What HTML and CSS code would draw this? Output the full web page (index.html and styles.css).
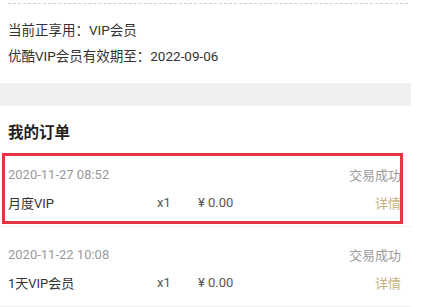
FILE: index.html
```html
<!DOCTYPE html>
<html lang="zh">
<head>
<meta charset="utf-8">
<link rel="stylesheet" href="styles.css">
</head>
<body>
<div class="page">
  <div class="top">
    <div class="dash"></div>
    <div class="infos">
      <div class="info">当前正享用：VIP会员</div>
      <div class="info">优酷VIP会员有效期至：2022-09-06</div>
    </div>
  </div>
  <div class="band"></div>
  <div class="title">我的订单</div>
  <div class="order">
    <div class="row">
      <span class="date">2020-11-27 08:52</span>
      <span class="status">交易成功</span>
    </div>
    <div class="row">
      <span class="name">月度VIP</span>
      <span class="qty">x1</span>
      <span class="price">¥ 0.00</span>
      <span class="detail">详情</span>
    </div>
    <div class="highlight"></div>
  </div>
  <div class="order">
    <div class="row">
      <span class="date">2020-11-22 10:08</span>
      <span class="status">交易成功</span>
    </div>
    <div class="row">
      <span class="name">1天VIP会员</span>
      <span class="qty">x1</span>
      <span class="price">¥ 0.00</span>
      <span class="detail">详情</span>
    </div>
  </div>
</div>
</body>
</html>
```
FILE: styles.css
```css
html, body {
  margin: 0;
  padding: 0;
  background: #ffffff;
}
body {
  font-family: Roboto, "Noto Sans CJK SC", sans-serif;
  color: #333333;
  font-size: 13px;
}
.page {
  width: 411px;
}
.top {
  height: 80px;
  padding: 0 8px;
  box-sizing: border-box;
}
.dash {
  margin: 3px -5px 0 0;
  border-top: 1px dashed #cfcfcf;
}
.infos {
  margin-top: 13px;
}
.info {
  line-height: 26px;
  font-size: 13.5px;
}
.band {
  height: 23px;
  background: #efefef;
}
.title {
  height: 41px;
  box-sizing: border-box;
  padding: 16px 8px 0;
  line-height: 22px;
  font-size: 15.5px;
  font-weight: bold;
  color: #222222;
}
.order {
  position: relative;
  height: 80px;
  box-sizing: border-box;
  padding: 13px 10px 0 8px;
  border-bottom: 1px solid #f1f1f1;
}
.row {
  display: flex;
  align-items: center;
  height: 28px;
}
.date {
  color: #9a9a9a;
  flex: 1;
}
.status {
  color: #9a9a9a;
}
.name {
  width: 149px;
}
.qty {
  width: 41px;
  color: #555555;
}
.price {
  flex: 1;
  color: #555555;
}
.detail {
  color: #c6b27f;
}
.highlight {
  position: absolute;
  left: 2px;
  top: 6px;
  width: 401px;
  height: 71px;
  box-sizing: border-box;
  border: 3px solid #e3353f;
}
```
